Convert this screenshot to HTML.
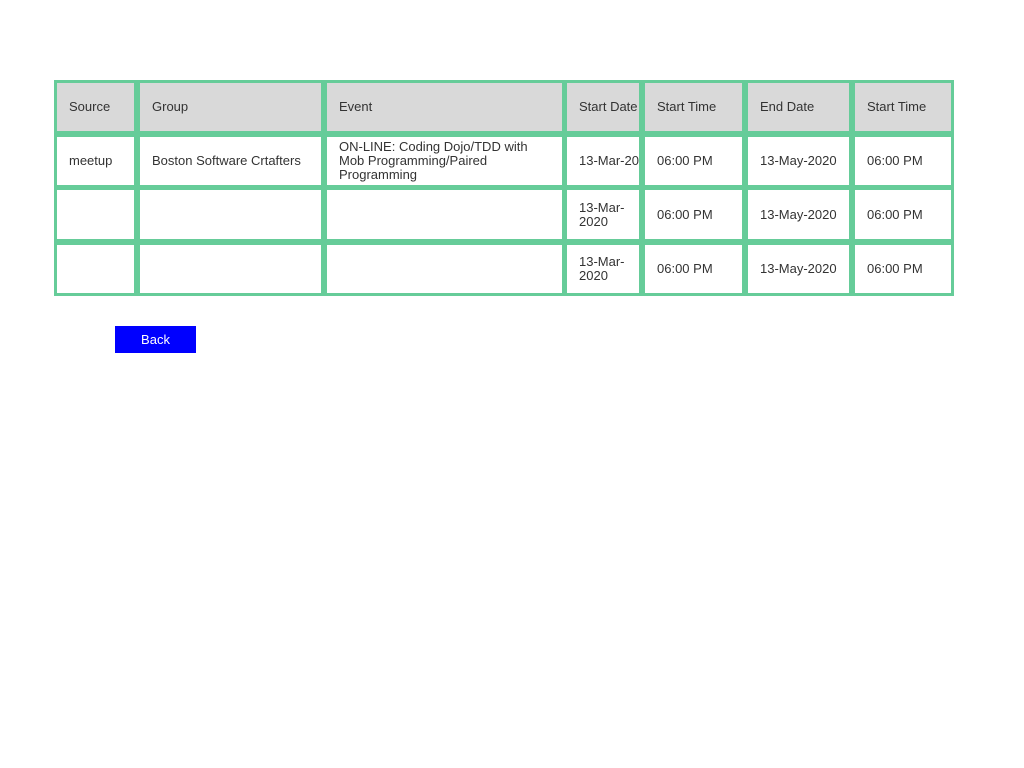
<!DOCTYPE html>
<html><head><style>
body{margin:0;background:#fff;font-family:"Liberation Sans",Arial,sans-serif;font-size:13px;color:#333;}
.t{position:absolute;left:54px;top:80px;width:900px;height:216px;background:#66cc99;}
.c{position:absolute;display:flex;align-items:center;box-sizing:border-box;padding-left:12px;background:#fff;line-height:14px;}
.h{background:#d9d9d9;}
.btn{position:absolute;left:115px;top:326px;width:81px;height:27px;background:#0000ff;color:#fff;display:flex;align-items:center;justify-content:center;font-size:13px;}
</style></head><body>
<div class="t"></div>
<div id="g"></div>
<script>
var xs=[[57,134],[140,321],[327,562],[567,639],[645,742],[748,849],[855,951]];
var ys=[[83,131],[137,185],[190,239],[245,293]];
var data=[["Source","Group","Event","Start Date","Start Time","End Date","Start Time"],
["meetup","Boston Software Crtafters","ON-LINE: Coding Dojo/TDD with<br>Mob Programming/Paired<br>Programming","13-Mar-20","06:00 PM","13-May-2020","06:00 PM"],
["","","","13-Mar-<br>2020","06:00 PM","13-May-2020","06:00 PM"],
["","","","13-Mar-<br>2020","06:00 PM","13-May-2020","06:00 PM"]];
var h="";
for(var r=0;r<4;r++)for(var c=0;c<7;c++){
h+='<div class="c'+(r==0?' h':'')+'" style="left:'+xs[c][0]+'px;top:'+ys[r][0]+'px;width:'+(xs[c][1]-xs[c][0])+'px;height:'+(ys[r][1]-ys[r][0])+'px"><div>'+data[r][c]+'</div></div>';
}
document.getElementById("g").innerHTML=h;
</script>
<div class="btn">Back</div>
</body></html>
